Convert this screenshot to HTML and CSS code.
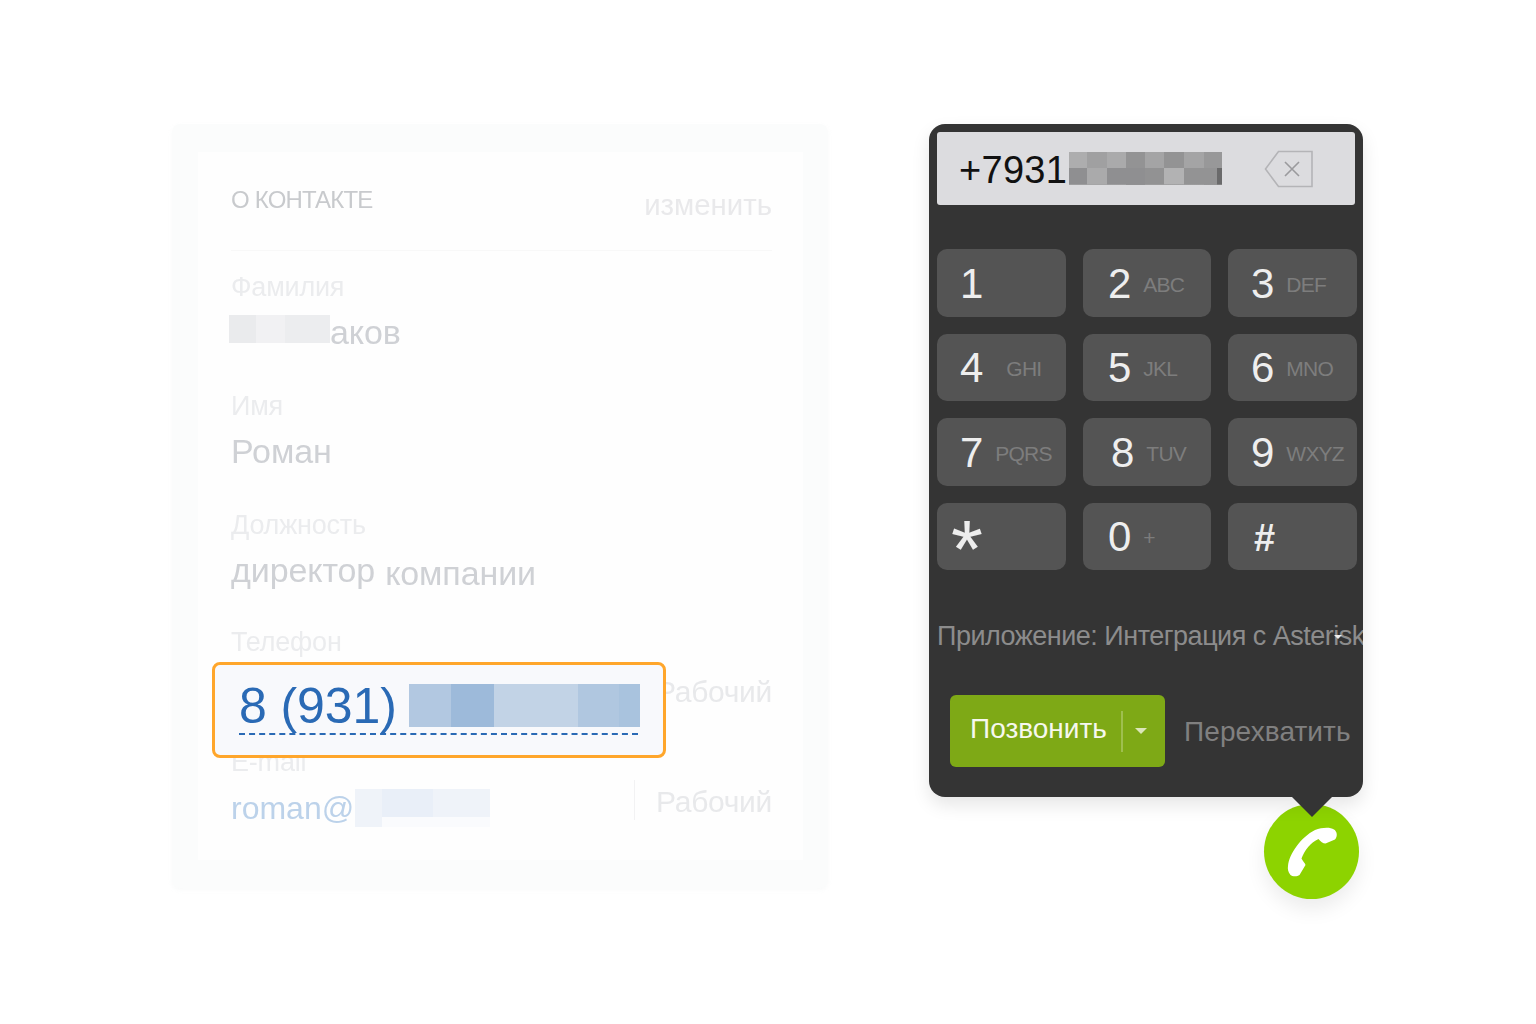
FILE: index.html
```html
<!DOCTYPE html>
<html lang="ru">
<head>
    <meta charset="UTF-8">
    <title>Контакт и телефон</title>
    <link rel="stylesheet" href="styles.css">
</head>
<body>
    <main class="page">
        <section class="card">
            <div class="card-inner">
                <div class="card-head">
                    <h2 class="card-title">О КОНТАКТЕ</h2>
                    <a class="card-edit">изменить</a>
                </div>

                <div class="field">
                    <div class="field-label">Фамилия</div>
                    <div class="field-value"><span class="mosaic mosaic-name"></span>аков</div>
                </div>
                <div class="field">
                    <div class="field-label">Имя</div>
                    <div class="field-value">Роман</div>
                </div>
                <div class="field field-job">
                    <div class="field-label">Должность</div>
                    <div class="field-value">директор <span class="word-low">компании</span></div>
                </div>
                <div class="field field-phone">
                    <div class="field-label">Телефон</div>
                    <div class="phone-row">
                        <span class="row-type">Рабочий</span>
                        <div class="phone-box">
                            <div class="phone-number">
                                <span>8 (931)</span>
                                <span class="mosaic mosaic-phone"></span>
                            </div>
                        </div>
                    </div>
                </div>
                <div class="field">
                    <div class="field-label">E-mail</div>
                    <div class="email-row">
                        <span class="email">roman@</span>
                        <span class="mosaic mosaic-email"></span>
                        <span class="row-sep"></span>
                        <span class="row-type">Рабочий</span>
                    </div>
                </div>
            </div>
        </section>

        <section class="phone-col">
            <div class="dialer">
                <div class="display">
                    <span class="display-number">+7931</span>
                    <span class="mosaic mosaic-display"></span>
                    <svg class="backspace" width="50" height="38" viewBox="0 0 50 38" fill="none" stroke="#b4b4b7" stroke-width="1.6">
                        <path d="M1.5 19 L14.5 1.5 H48 V36.5 H14.5 Z"/>
                        <path d="M21 12 L35 26 M35 12 L21 26" stroke="#9a9a9d"/>
                    </svg>
                </div>

                <div class="keys">
                    <button class="key"><span class="digit">1</span></button>
                    <button class="key key-mid"><span class="digit">2</span><span class="sub">ABC</span></button>
                    <button class="key"><span class="digit">3</span><span class="sub">DEF</span></button>
                    <button class="key"><span class="digit">4</span><span class="sub sub-far">GHI</span></button>
                    <button class="key key-mid"><span class="digit">5</span><span class="sub">JKL</span></button>
                    <button class="key"><span class="digit">6</span><span class="sub">MNO</span></button>
                    <button class="key"><span class="digit">7</span><span class="sub">PQRS</span></button>
                    <button class="key key-mid key-eight"><span class="digit">8</span><span class="sub">TUV</span></button>
                    <button class="key"><span class="digit">9</span><span class="sub">WXYZ</span></button>
                    <button class="key key-star"><span class="digit">*</span></button>
                    <button class="key key-mid"><span class="digit">0</span><span class="sub">+</span></button>
                    <button class="key"><span class="digit digit-hash">#</span></button>
                </div>

                <div class="app-line">Приложение: Интеграция с Asterisk<span class="app-caret"></span></div>

                <div class="actions">
                    <button class="call-btn">
                        <span class="call-text">Позвонить</span>
                        <span class="call-sep"></span>
                        <span class="call-caret"></span>
                    </button>
                    <a class="pickup">Перехватить</a>
                </div>
            </div>

            <div class="fab">
                <svg width="95" height="95" viewBox="0 0 95 95">
                    <path fill="#fff" d="M51 26 C58 23.500 66 23 70 25.500 C73 27.500 74 32 71 35.500 L61.500 39.500 C59 39.500 56.500 37.500 54.500 35 C47 38 40 47 37.500 54.500 C39 57.500 41 59 41.500 61 L35.500 71 C33 73 28 72.500 26.500 71 C24 68 23.500 65 24 62 C25 50 37 33 51 26 Z"/>
                </svg>
            </div>
        </section>
    </main>
</body>
</html>
```

FILE: styles.css
```css
body {
    margin: 0;
    background-color: #fff;
    font-family: "Liberation Sans", Arial, sans-serif;
}

.page {
    display: flex;
    align-items: flex-start;
    gap: 101px;
    min-height: 1024px;
    padding: 124px 0 0 172px;
    box-sizing: border-box;
}

/* left card, faded */
.card {
    width: 656px;
    height: 764px;
    padding: 28px 25px 28px 26px;
    box-sizing: border-box;
    background-color: #fbfcfc;
    border-radius: 8px;
    box-shadow: 0 2px 4px rgba(235, 237, 237, 0.3);
}

.card-inner {
    height: 100%;
    padding: 0 31px 0 33px;
    box-sizing: border-box;
    background-color: #fefefe;
}

.card-head {
    display: flex;
    justify-content: space-between;
    align-items: flex-start;
    height: 98px;
    margin-bottom: 21px;
    border-bottom: 1px solid #f8f8f8;
    filter: blur(0.4px);
}

.card-title {
    margin: 33px 0 0;
    font-size: 24px;
    font-weight: normal;
    line-height: 30px;
    letter-spacing: -0.8px;
    color: #c8cacd;
}

.card-edit {
    margin-top: 36px;
    font-size: 29.400px;
    line-height: 34px;
    color: #e9e9eb;
}

.field {
    height: 119px;
}

.field-job {
    height: 117px;
}

.field-phone {
    height: 120px;
}

.field-label {
    font-size: 27px;
    line-height: 30px;
    letter-spacing: -0.2px;
    color: #ebecee;
    filter: blur(0.4px);
}

.field-value {
    display: flex;
    margin-top: 10px;
    font-size: 34px;
    line-height: 40px;
    letter-spacing: -0.1px;
    color: #cfd1d5;
    filter: blur(0.3px);
}

.word-low {
    margin-left: 10px;
    transform: translateY(3px);
}

.mosaic {
    display: block;
    flex: none;
}

.mosaic-name {
    width: 101px;
    height: 28px;
    margin: 3px 0 0 -2px;
    background: linear-gradient(90deg, #eaebed 0 27%, #f1f1f3 27% 55%, #ecedef 55% 100%);
}

.phone-row {
    position: relative;
    display: flex;
    justify-content: flex-end;
    height: 40px;
    margin-top: 15px;
}

.row-type {
    font-size: 30px;
    line-height: 40px;
    letter-spacing: -0.3px;
    color: #e8e9eb;
    filter: blur(0.3px);
}

.phone-box {
    position: absolute;
    top: -10px;
    left: -19px;
    z-index: 2;
    width: 454px;
    height: 96px;
    padding: 15px 0 0 24px;
    box-sizing: border-box;
    background-color: #f8f9fc;
    border: 3px solid #ffa62b;
    border-radius: 8px;
}

.phone-number {
    display: flex;
    align-items: flex-start;
    gap: 12px;
    width: 399px;
    height: 53px;
    border-bottom: 2px dashed #2a6ab5;
    white-space: nowrap;
    font-size: 50px;
    line-height: 52px;
    letter-spacing: -0.1px;
    color: #2a6ab5;
}

.mosaic-phone {
    width: 231px;
    height: 43px;
    margin-top: 4px;
    background: linear-gradient(90deg, #b2c8e1 0 18%, #9dbada 18% 37%, #c2d3e6 37% 73%, #b0c7e0 73% 91%, #a9c3de 91% 100%);
}

.email-row {
    display: flex;
    align-items: flex-start;
    height: 40px;
    margin-top: 11px;
}

.email {
    font-size: 32px;
    line-height: 40px;
    color: #bcd2ea;
    filter: blur(0.3px);
}

.mosaic-email {
    width: 135px;
    height: 38px;
    margin: 1px 0 0 1px;
    background:
        linear-gradient(90deg, transparent 0 20%, #fafbfd 20% 100%) bottom / 100% 10px no-repeat,
        linear-gradient(90deg, #eff3f9 0 20%, #e9eff8 20% 58%, #eff3f9 58% 100%);
}

.row-sep {
    flex: none;
    width: 1px;
    height: 40px;
    margin: -8px 21px 0 auto;
    background-color: #f2f2f3;
}

.email-row .row-type {
    margin-top: -6px;
}

/* dialer */
.phone-col {
    display: flex;
    flex-direction: column;
}

.dialer {
    position: relative;
    z-index: 1;
    width: 434px;
    height: 673px;
    padding: 8px;
    box-sizing: border-box;
    background-color: #343434;
    border-radius: 16px;
    box-shadow: 0 8px 18px rgba(0, 0, 0, 0.1);
}

.dialer::after {
    content: "";
    position: absolute;
    top: 100%;
    left: 363px;
    border-top: 20px solid #343434;
    border-left: 20px solid transparent;
    border-right: 20px solid transparent;
}

.display {
    display: flex;
    align-items: center;
    width: 418px;
    height: 73px;
    padding-left: 22px;
    box-sizing: border-box;
    background-color: #dcdcdf;
    border-radius: 3px;
}

.display-number {
    margin-top: 3px;
    font-size: 38px;
    line-height: 44px;
    letter-spacing: 0.3px;
    color: #111;
}

.mosaic-display {
    width: 153px;
    height: 33px;
    margin: -1px 0 0 2px;
    background:
        linear-gradient(90deg, #8f8f91 0 12%, #aaaaab 12% 25%, #8f8f91 25% 50%, #929293 50% 62%, #b2b2b3 62% 75%, #939394 75% 97%, #6a6a6b 97% 100%) bottom / 100% 50% no-repeat,
        linear-gradient(90deg, #adadae 0 12%, #a0a0a1 12% 25%, #aaaaab 25% 37%, #939394 37% 50%, #a4a4a5 50% 62%, #939394 62% 75%, #a4a4a5 75% 88%, #989899 88% 100%);
}

.backspace {
    flex: none;
    margin-left: 42px;
}

.keys {
    display: grid;
    grid-template-columns: 129px 128px 129px;
    grid-auto-rows: 67.500px;
    gap: 17px;
    margin-top: 44px;
}

.key {
    display: flex;
    align-items: center;
    padding: 2px 0 0 23px;
    background-color: #545454;
    border: none;
    border-radius: 10px;
    font-family: inherit;
    color: #eee;
}

.key-mid {
    padding-left: 25px;
}

.key-eight {
    padding-left: 28px;
}

.key-star {
    align-items: flex-start;
    padding: 2px 0 0 14px;
}

.digit {
    font-size: 42px;
    line-height: 48px;
}

.key-star .digit {
    font-size: 82px;
    line-height: 88px;
}

.digit-hash {
    margin: 2px 0 0 3px;
    font-size: 38px;
    font-weight: bold;
}

.sub {
    margin: 2px 0 0 12px;
    font-size: 21px;
    letter-spacing: -0.8px;
    color: #7d7d7d;
}

.sub-far {
    margin-left: 23px;
}

.app-line {
    position: relative;
    display: flex;
    width: 426px;
    margin-top: 49px;
    overflow: hidden;
    white-space: nowrap;
    font-size: 27px;
    line-height: 34px;
    letter-spacing: -0.5px;
    color: #8c8c8c;
}

.app-caret {
    position: absolute;
    top: 16px;
    left: 397px;
    border-top: 4px solid #eee;
    border-left: 4px solid transparent;
    border-right: 4px solid transparent;
}

.actions {
    display: flex;
    align-items: center;
    gap: 19px;
    margin-top: 42px;
    padding-left: 13px;
}

.call-btn {
    display: flex;
    align-items: center;
    width: 215px;
    height: 72px;
    padding: 0 0 0 20px;
    box-sizing: border-box;
    background-color: #7ea916;
    border: none;
    border-radius: 6px;
    font-family: inherit;
    font-size: 28px;
    color: #f6f8ee;
}

.call-text {
    margin-bottom: 5px;
}

.call-sep {
    width: 2px;
    height: 41px;
    margin-left: 14px;
    background-color: #9fbf4f;
}

.call-caret {
    margin-left: 12px;
    border-top: 6px solid #dbe6b9;
    border-left: 6px solid transparent;
    border-right: 6px solid transparent;
}

.pickup {
    margin-top: 1px;
    font-size: 28px;
    letter-spacing: 0.1px;
    color: #808080;
}

.fab {
    display: flex;
    width: 95px;
    height: 95px;
    margin: 7px 0 0 335px;
    background-color: #8dd300;
    border-radius: 50%;
    box-shadow: 0 10px 20px rgba(0, 0, 0, 0.08);
}
```
